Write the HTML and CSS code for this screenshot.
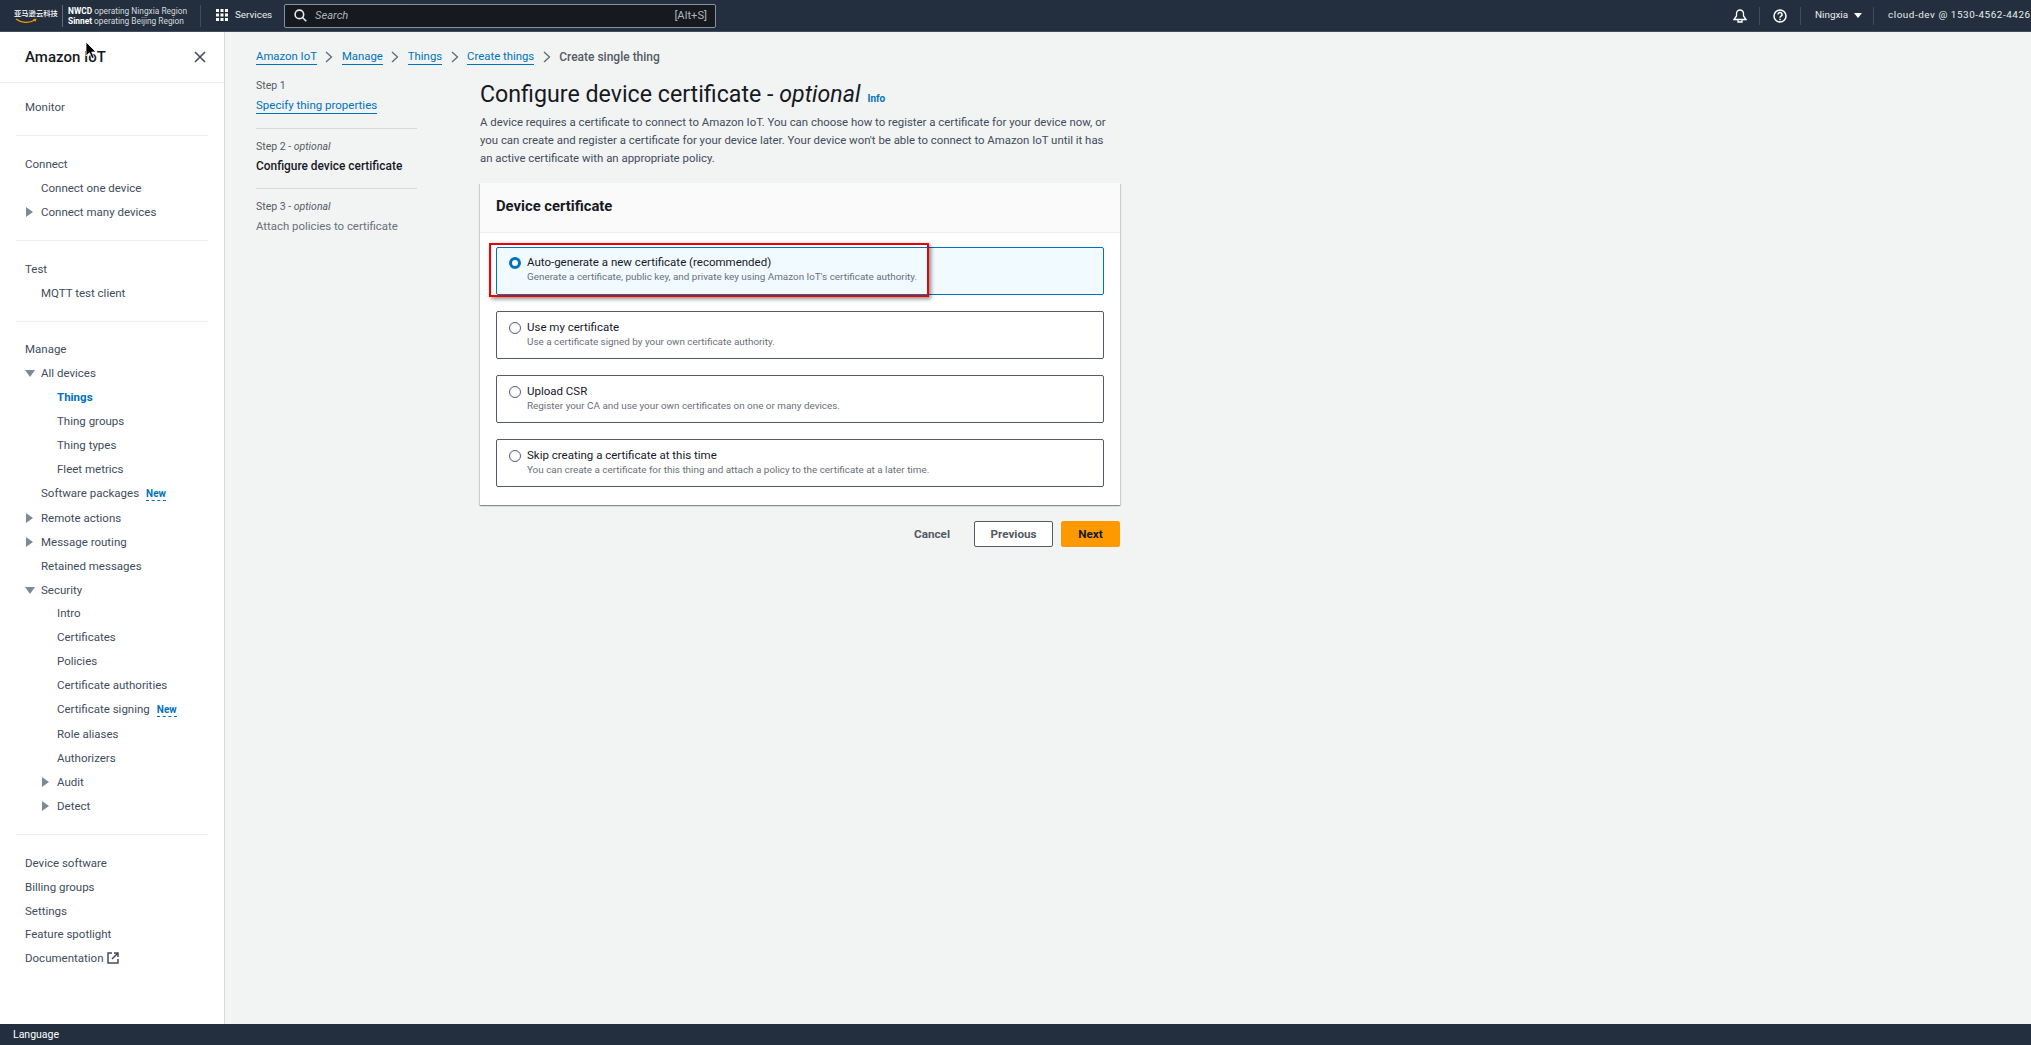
FILE: index.html
```html
<!DOCTYPE html>
<html lang="en">
<head>
<meta charset="utf-8">
<title>Create single thing</title>
<link rel="stylesheet" href="styles.css">
</head>
<body>
<div class="page">
  <header class="topbar">
    <div class="logo">
      <span class="logo-cn">亚马逊云科技</span>
      <svg class="smile" width="24" height="7" viewBox="0 0 24 7"><path d="M2 1c5 4 13 4.500 19 1" fill="none" stroke="#ff9900" stroke-width="1.300"/><path d="M19 1l3.500-.3-1 3z" fill="#ff9900"/></svg>
    </div>
    <div class="operators">
      <div><b>NWCD</b> operating Ningxia Region</div>
      <div><b>Sinnet</b> operating Beijing Region</div>
    </div>
    <div class="services">
      <svg width="12" height="12" viewBox="0 0 12 12" fill="#fff"><rect width="3" height="3"/><rect x="4.500" width="3" height="3"/><rect x="9" width="3" height="3"/><rect y="4.500" width="3" height="3"/><rect x="4.500" y="4.500" width="3" height="3"/><rect x="9" y="4.500" width="3" height="3"/><rect y="9" width="3" height="3"/><rect x="4.500" y="9" width="3" height="3"/><rect x="9" y="9" width="3" height="3"/></svg>
      <span>Services</span>
    </div>
    <div class="search">
      <svg width="13" height="13" viewBox="0 0 14 14" fill="none" stroke="#e9ebed" stroke-width="1.700"><circle cx="5.800" cy="5.800" r="4.600"/><path d="M9.200 9.200l4 4"/></svg>
      <span class="search-ph">Search</span>
      <span class="search-key">[Alt+S]</span>
    </div>
    <div class="top-right">
      <div class="top-cell icon-cell">
        <svg width="14" height="14" viewBox="0 0 14 14" fill="none" stroke="#fff" stroke-width="1.300"><path d="M1 10.500h12L10.500 7V4.500a3.500 3.500 0 0 0-7 0V7z"/><path d="M5 10.500v2.500h4v-2.500"/></svg>
      </div>
      <div class="top-cell icon-cell">
        <svg width="14" height="14" viewBox="0 0 14 14" fill="none" stroke="#fff" stroke-width="1.500"><circle cx="7" cy="7" r="6"/><path d="M5 5.500a2 2 0 1 1 3 1.700c-.7.400-1 .8-1 1.500"/><path d="M7 9.800v1.400"/></svg>
      </div>
      <div class="top-cell region"><span>Ningxia</span><i class="caret"></i></div>
      <div class="top-cell account"><span>cloud-dev @ 1530-4562-4426</span><i class="caret"></i></div>
    </div>
  </header>

  <div class="body">
    <nav class="sidebar">
      <div class="side-head">
        <span class="side-title">Amazon IoT</span>
        <svg width="12" height="12" viewBox="0 0 12 12" fill="none" stroke="#414d5c" stroke-width="1.600"><path d="M1 1l10 10M11 1L1 11"/></svg>
      </div>
      <ul class="nav-group first">
        <li>Monitor</li>
      </ul>
      <ul class="nav-group">
        <li>Connect</li>
        <li class="lv1">Connect one device</li>
        <li class="lv1 exp"><i class="tri-r"></i>Connect many devices</li>
      </ul>
      <ul class="nav-group">
        <li>Test</li>
        <li class="lv1">MQTT test client</li>
      </ul>
      <ul class="nav-group manage">
        <li>Manage</li>
        <li class="lv1 exp"><i class="tri-d"></i>All devices</li>
        <li class="lv2 active">Things</li>
        <li class="lv2">Thing groups</li>
        <li class="lv2">Thing types</li>
        <li class="lv2">Fleet metrics</li>
        <li class="lv1 tall">Software packages<span class="new">New</span></li>
        <li class="lv1 exp"><i class="tri-r"></i>Remote actions</li>
        <li class="lv1 exp"><i class="tri-r"></i>Message routing</li>
        <li class="lv1">Retained messages</li>
        <li class="lv1 exp"><i class="tri-d"></i>Security</li>
        <li class="lv2 pull">Intro</li>
        <li class="lv2">Certificates</li>
        <li class="lv2">Policies</li>
        <li class="lv2">Certificate authorities</li>
        <li class="lv2 tall">Certificate signing<span class="new">New</span></li>
        <li class="lv2">Role aliases</li>
        <li class="lv2">Authorizers</li>
        <li class="lv2 exp"><i class="tri-r"></i>Audit</li>
        <li class="lv2 exp"><i class="tri-r"></i>Detect</li>
      </ul>
      <ul class="nav-group last">
        <li>Device software</li>
        <li>Billing groups</li>
        <li>Settings</li>
        <li class="pull">Feature spotlight</li>
        <li>Documentation<svg class="ext" width="12" height="12" viewBox="0 0 12 12" fill="none" stroke="#414d5c" stroke-width="1.500"><path d="M5 1H1v10h10V7"/><path d="M7 1h4v4M11 1L5 7"/></svg></li>
      </ul>
    </nav>

    <main class="content">
      <div class="crumbs">
        <a>Amazon IoT</a><svg class="chev" width="8" height="12" viewBox="0 0 8 12"><path d="M1 1l5.500 5L1 11" fill="none" stroke="#5f6b7a" stroke-width="1.300"/></svg>
        <a>Manage</a><svg class="chev" width="8" height="12" viewBox="0 0 8 12"><path d="M1 1l5.500 5L1 11" fill="none" stroke="#5f6b7a" stroke-width="1.300"/></svg>
        <a>Things</a><svg class="chev" width="8" height="12" viewBox="0 0 8 12"><path d="M1 1l5.500 5L1 11" fill="none" stroke="#5f6b7a" stroke-width="1.300"/></svg>
        <a>Create things</a><svg class="chev" width="8" height="12" viewBox="0 0 8 12"><path d="M1 1l5.500 5L1 11" fill="none" stroke="#5f6b7a" stroke-width="1.300"/></svg>
        <span class="crumb-cur">Create single thing</span>
      </div>
      <div class="wizard">
        <ol class="steps">
          <li class="step">
            <div class="step-no">Step 1</div>
            <a class="step-link">Specify thing properties</a>
          </li>
          <li class="step">
            <div class="step-no">Step 2 - <em>optional</em></div>
            <div class="step-cur">Configure device certificate</div>
          </li>
          <li class="step">
            <div class="step-no">Step 3 - <em>optional</em></div>
            <div class="step-off">Attach policies to certificate</div>
          </li>
        </ol>
        <section class="form">
          <h1>Configure device certificate - <em>optional</em><a class="info">Info</a></h1>
          <p class="desc">A device requires a certificate to connect to Amazon IoT. You can choose how to register a certificate for your device now, or you can create and register a certificate for your device later. Your device won't be able to connect to Amazon IoT until it has an active certificate with an appropriate policy.</p>
          <div class="card">
            <h2 class="card-head">Device certificate</h2>
            <div class="tiles">
              <div class="tile selected">
                <span class="radio on"></span>
                <div><div class="t-title">Auto-generate a new certificate (recommended)</div><div class="t-sub">Generate a certificate, public key, and private key using Amazon IoT's certificate authority.</div></div>
                <div class="redbox"></div>
              </div>
              <div class="tile">
                <span class="radio"></span>
                <div><div class="t-title">Use my certificate</div><div class="t-sub">Use a certificate signed by your own certificate authority.</div></div>
              </div>
              <div class="tile">
                <span class="radio"></span>
                <div><div class="t-title">Upload CSR</div><div class="t-sub">Register your CA and use your own certificates on one or many devices.</div></div>
              </div>
              <div class="tile">
                <span class="radio"></span>
                <div><div class="t-title">Skip creating a certificate at this time</div><div class="t-sub">You can create a certificate for this thing and attach a policy to the certificate at a later time.</div></div>
              </div>
            </div>
          </div>
          <div class="actions">
            <span class="btn-link">Cancel</span>
            <span class="btn">Previous</span>
            <span class="btn primary">Next</span>
          </div>
        </section>
      </div>
    </main>
  </div>

  <footer class="footer">Language</footer>

  <svg class="cursor" width="13" height="19" viewBox="0 0 13 19"><path d="M1 1v14l3.500-3.200 2.500 5.700 2.200-1-2.500-5.500H11z" fill="#000" stroke="#fff" stroke-width=".8"/></svg>
</div>
</body>
</html>
```
FILE: styles.css
```css
* { box-sizing: border-box; }
html, body { margin: 0; padding: 0; }
body {
  font-family: Roboto, "Noto Sans CJK SC", sans-serif;
  font-size: 12px;
  color: #16191f;
  background: #f2f3f3;
}
ul, ol { list-style: none; margin: 0; padding: 0; }
.page { position: relative; width: 2031px; height: 1045px; display: flex; flex-direction: column; overflow: hidden; }

/* top bar */
.topbar { height: 32px; flex: none; background: #232f3e; color: #fff; display: flex; align-items: center; border-bottom: 1px solid #414d5c; }
.logo { width: 63px; padding-left: 14px; height: 22px; border-right: 1px solid #5f6b7a; display: flex; flex-direction: column; align-items: flex-start; flex: none; }
.logo-cn { font-size: 7.300px; line-height: 11px; margin-top: 3px; white-space: nowrap; font-weight: 500; }
.smile { margin-top: -1px; }
.operators { margin-left: 5px; width: 133px; height: 22px; border-right: 1px solid #414d5c; font-size: 8.350px; line-height: 10px; color: #d5dbdb; padding-top: 1px; flex: none; white-space: nowrap; }
.operators b { color: #fff; font-weight: 700; }
.services { width: 83px; padding-left: 15px; display: flex; align-items: center; gap: 7px; font-size: 9.900px; flex: none; color: #eaeded; margin-top: -2px; }
.search { width: 432px; height: 24px; flex: none; background: #16191f; border: 1px solid #879596; border-radius: 2px; display: flex; align-items: center; padding: 0 8px 1px 9px; gap: 8px; color: #aab7b8; font-size: 11.200px; }
.search-ph { font-style: italic; flex: 1; }
.top-right { margin-left: auto; display: flex; align-items: center; height: 100%; }
.top-cell { height: 18px; display: flex; align-items: center; border-left: 1px solid #414d5c; font-size: 9.900px; color: #eaeded; white-space: nowrap; }
.top-cell span { margin-bottom: 3px; }
.icon-cell { width: 41px; justify-content: center; }
.icon-cell:first-child { border-left: none; width: 30px; padding-right: 8px; }
.region { width: 73px; padding-left: 14px; }
.account { width: 158px; padding-left: 14px; }
.account span { letter-spacing: .55px; }
.account .caret { margin-left: 3px; }
.caret { width: 0; height: 0; border-left: 4px solid transparent; border-right: 4px solid transparent; border-top: 5px solid #fff; margin-left: 6px; flex: none; }

/* body */
.body { flex: 1; min-height: 0; display: flex; }
.sidebar { width: 225px; flex: none; background: #fff; border-right: 1px solid #d5dbdb; color: #414d5c; font-size: 11.500px; }
.side-head { height: 51px; border-bottom: 1px solid #eaeded; display: flex; align-items: center; justify-content: space-between; padding: 0 18px 0 25px; }
.side-title { font-size: 15px; font-weight: 500; color: #16191f; }
.nav-group { margin: 0 16px; padding: 16px 0 16px 9px; border-bottom: 1px solid #eaeded; }
.nav-group.first { padding-top: 12px; }
.nav-group.manage { padding-top: 15px; }
.nav-group.last { border-bottom: none; }
.nav-group li { height: 24px; line-height: 24px; position: relative; white-space: nowrap; }
.nav-group li.tall { height: 25px; }
.nav-group li.pull { margin-top: -1px; }
.lv1 { padding-left: 16px; }
.lv2 { padding-left: 32px; }
.active { color: #0073bb; font-weight: 700; }
.tri-r, .tri-d { position: absolute; width: 0; height: 0; }
.tri-r { left: 1px; top: 7px; border-top: 5px solid transparent; border-bottom: 5px solid transparent; border-left: 7px solid #7d8998; }
.tri-d { left: 0; top: 9px; border-left: 5px solid transparent; border-right: 5px solid transparent; border-top: 7px solid #7d8998; }
.lv2 .tri-r { left: 17px; }
.new { display: inline-block; margin-left: 7px; color: #0073bb; font-size: 10px; font-weight: 700; line-height: 13px; border-bottom: 1px dashed #0073bb; }
.ext { margin-left: 4px; vertical-align: -2px; }

/* content */
.content { flex: 1; padding: 15px 0 0 31px; min-width: 0; }
.crumbs { display: flex; align-items: center; height: 20px; color: #0073bb; font-size: 11.350px; }
.crumbs a { border-bottom: 1px solid #0073bb; line-height: 15px; }
.chev { margin: 0 8.500px; flex: none; }
.crumb-cur { color: #545b64; font-weight: 500; font-size: 12px; }
.wizard { display: flex; margin-top: 7px; }
.steps { width: 161px; margin-right: 63px; flex: none; font-size: 11.500px; }
.step { border-bottom: 1px solid #d5dbdb; height: 50px; margin-bottom: 10px; }
.step:first-child { height: 55px; padding-top: 4px; }
.step:last-child { border-bottom: none; }
.step-no { font-size: 10.500px; color: #545b64; line-height: 15px; margin-bottom: 4px; }
.step:first-child .step-no { margin-bottom: 3px; }
.step-link { color: #0073bb; border-bottom: 1px solid #0073bb; line-height: 16px; display: inline-block; margin-top: 1px; }
.step-cur { font-weight: 500; color: #16191f; line-height: 16px; white-space: nowrap; font-size: 11.900px; }
.step-off { color: #687078; line-height: 16px; white-space: nowrap; font-size: 11.400px; }
.form { width: 640px; flex: none; }
h1 { margin: 5px 0 0; height: 30px; font-size: 23.200px; line-height: 30px; font-weight: 400; white-space: nowrap; }
.info { font-size: 10px; font-weight: 700; font-style: normal; color: #0073bb; margin-left: 7px; line-height: 1; }
.desc { margin: 4px 0 0; padding-right: 8px; font-size: 11.400px; line-height: 18px; color: #414d5c; }
.card { margin-top: 16px; background: #fff; box-shadow: 0 1px 1px rgba(0,28,36,.3), 1px 1px 1px rgba(0,28,36,.12), -1px 1px 1px rgba(0,28,36,.12); height: 322px; }
.card-head { margin: 0; height: 50px; background: #fafafa; border-bottom: 1px solid #eaeded; font-size: 14.800px; font-weight: 700; padding: 0 16px 4px; display: flex; align-items: center; }
.tiles { padding: 14px 16px 0; display: flex; flex-direction: column; gap: 16px; }
.tile { position: relative; height: 48px; border: 1px solid #545b64; border-radius: 2px; display: flex; align-items: flex-start; padding: 8px 12px 0; gap: 6px; background: #fff; }
.tile.selected { border-color: #0073bb; background: #f1faff; padding-top: 7px; }
.t-title { font-size: 11.500px; line-height: 15px; color: #16191f; white-space: nowrap; }
.t-sub { font-size: 9.900px; line-height: 14px; color: #687078; white-space: nowrap; }
.radio { width: 12px; height: 12px; border-radius: 50%; border: 1px solid #545b64; background: #fff; margin-top: 2px; flex: none; }
.radio.on { border: 3.500px solid #0073bb; }
.redbox { position: absolute; left: -8px; top: -5px; width: 440px; height: 54px; border: 2.500px solid #f00000; box-shadow: 2px 2px 4px rgba(0,0,0,.45); pointer-events: none; }
.actions { display: flex; justify-content: flex-end; align-items: center; margin-top: 16px; font-weight: 700; font-size: 11.700px; }
.btn-link { color: #545b64; margin-right: 24px; }
.btn { height: 26px; width: 79px; display: flex; align-items: center; justify-content: center; border: 1px solid #545b64; border-radius: 2px; background: #fff; color: #545b64; }
.btn.primary { width: 59px; margin-left: 8px; background: #ff9900; border-color: #ff9900; color: #16191f; }

/* footer */
.footer { height: 21px; flex: none; background: #232f3e; color: #fff; font-size: 10.500px; line-height: 21px; padding-left: 13px; }
.cursor { position: absolute; left: 85px; top: 41px; }
```
